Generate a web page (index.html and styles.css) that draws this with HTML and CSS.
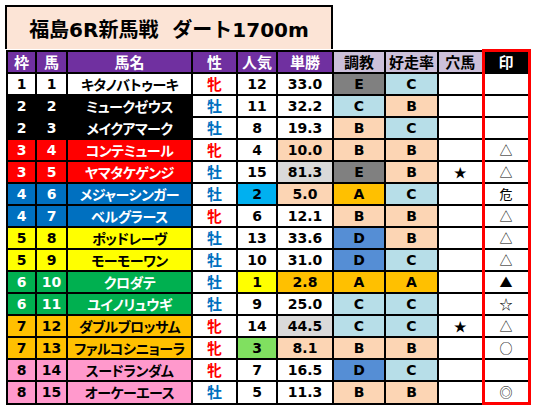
FILE: index.html
```html
<!DOCTYPE html>
<html lang="ja">
<head>
    <meta charset="UTF-8">
    <title>福島6R新馬戦 ダート1700m</title>
    <link rel="stylesheet" href="styles.css">
</head>
<body>
    <div class="sheet">
        <div class="title">福島6R新馬戦&nbsp;&nbsp;ダート1700m</div>
        <table class="race">
            <colgroup>
                <col class="c-waku"><col class="c-uma"><col class="c-name"><col class="c-sex"><col class="c-pop">
                <col class="c-odds"><col class="c-train"><col class="c-rate"><col class="c-ana"><col class="c-mark">
            </colgroup>
            <thead>
                <tr>
                    <th>枠</th><th>馬</th><th>馬名</th><th>性</th><th>人気</th><th>単勝</th>
                    <th class="sub">調教</th><th class="sub">好走率</th><th class="sub">穴馬</th><th class="mark">印</th>
                </tr>
            </thead>
            <tbody>
                <tr class="f1"><td>1</td><td>1</td><td>キタノバトゥーキ</td><td class="hin">牝</td><td>12</td><td>33.0</td><td class="gE">E</td><td class="gC">C</td><td class="ana"></td><td class="mark"></td></tr>
                <tr class="f2"><td>2</td><td>2</td><td>ミュークゼウス</td><td class="bo">牡</td><td>11</td><td>32.2</td><td class="gC">C</td><td class="gB">B</td><td class="ana"></td><td class="mark"></td></tr>
                <tr class="f2"><td>2</td><td>3</td><td>メイクアマーク</td><td class="bo">牡</td><td>8</td><td>19.3</td><td class="gB">B</td><td class="gC">C</td><td class="ana"></td><td class="mark"></td></tr>
                <tr class="f3"><td>3</td><td>4</td><td>コンテミュール</td><td class="hin">牝</td><td>4</td><td class="peach">10.0</td><td class="gB">B</td><td class="gB">B</td><td class="ana"></td><td class="mark">△</td></tr>
                <tr class="f3"><td>3</td><td>5</td><td>ヤマタケゲンジ</td><td class="bo">牡</td><td>15</td><td class="gray">81.3</td><td class="gE">E</td><td class="gB">B</td><td class="ana">★</td><td class="mark">△</td></tr>
                <tr class="f4"><td>4</td><td>6</td><td>メジャーシンガー</td><td class="bo">牡</td><td class="cyan">2</td><td class="peach">5.0</td><td class="gA">A</td><td class="gC">C</td><td class="ana"></td><td class="mark">危</td></tr>
                <tr class="f4"><td>4</td><td>7</td><td>ベルグラース</td><td class="hin">牝</td><td>6</td><td>12.1</td><td class="gB">B</td><td class="gB">B</td><td class="ana"></td><td class="mark">△</td></tr>
                <tr class="f5"><td>5</td><td>8</td><td>ポッドレーヴ</td><td class="bo">牡</td><td>13</td><td>33.6</td><td class="gD">D</td><td class="gB">B</td><td class="ana"></td><td class="mark">△</td></tr>
                <tr class="f5"><td>5</td><td>9</td><td>モーモーワン</td><td class="bo">牡</td><td>10</td><td>31.0</td><td class="gD">D</td><td class="gC">C</td><td class="ana"></td><td class="mark">△</td></tr>
                <tr class="f6"><td>6</td><td>10</td><td>クロダテ</td><td class="bo">牡</td><td class="yellow">1</td><td class="orange">2.8</td><td class="gA">A</td><td class="gA">A</td><td class="ana"></td><td class="mark">▲</td></tr>
                <tr class="f6"><td>6</td><td>11</td><td>ユイノリュウギ</td><td class="bo">牡</td><td>9</td><td>25.0</td><td class="gC">C</td><td class="gC">C</td><td class="ana"></td><td class="mark">☆</td></tr>
                <tr class="f7"><td>7</td><td>12</td><td>ダブルブロッサム</td><td class="hin">牝</td><td>14</td><td class="gray">44.5</td><td class="gC">C</td><td class="gC">C</td><td class="ana">★</td><td class="mark">△</td></tr>
                <tr class="f7"><td>7</td><td>13</td><td>ファルコシニョーラ</td><td class="hin">牝</td><td class="lgreen">3</td><td class="peach">8.1</td><td class="gB">B</td><td class="gB">B</td><td class="ana"></td><td class="mark">○</td></tr>
                <tr class="f8"><td>8</td><td>14</td><td>スードランダム</td><td class="hin">牝</td><td>7</td><td>16.5</td><td class="gD">D</td><td class="gC">C</td><td class="ana"></td><td class="mark"></td></tr>
                <tr class="f8 last"><td>8</td><td>15</td><td>オーケーエース</td><td class="bo">牡</td><td>5</td><td>11.3</td><td class="gB">B</td><td class="gB">B</td><td class="ana"></td><td class="mark">◎</td></tr>
            </tbody>
        </table>
    </div>
</body>
</html>
```

FILE: styles.css
```css
body {
    margin: 0;
    background-color: #ffffff;
    font-family: "DejaVu Sans", "Noto Sans CJK JP", sans-serif;
}

.sheet {
    padding: 5px 0 0 5px;
}

.title {
    width: 324px;
    height: 42px;
    border: 2px solid #000;
    border-bottom: none;
    background-color: #fce4d6;
    display: flex;
    justify-content: center;
    align-items: center;
    font-size: 20px;
    font-weight: bold;
    color: #000;
}

.race {
    margin-left: 1px;
    border-collapse: collapse;
    table-layout: fixed;
    width: 522px;
}

.c-waku { width: 29px; }
.c-uma { width: 31px; }
.c-name { width: 125px; }
.c-sex { width: 45px; }
.c-pop { width: 40px; }
.c-odds { width: 56px; }
.c-train { width: 52px; }
.c-rate { width: 53px; }
.c-ana { width: 45px; }
.c-mark { width: 46px; }

.race th,
.race td {
    border: 2px solid #000;
    height: 20px;
    padding: 0;
    line-height: 20px;
    text-align: center;
    white-space: nowrap;
    overflow: hidden;
    font-weight: bold;
}

.race th {
    background-color: #7030a0;
    color: #ffffff;
    font-family: "Noto Sans CJK JP", sans-serif;
    font-size: 15px;
}

.race th.sub {
    background-color: #ccc0da;
    color: #000;
}

.race th.mark {
    background-color: #000;
    color: #fff;
    border-top: 3px solid #ff0000;
}

.race td {
    font-size: 14px;
    color: #000;
    background-color: #fff;
}

/* horse name */
.race td:nth-child(3) {
    font-family: "Noto Sans CJK JP", sans-serif;
    font-size: 14px;
    font-feature-settings: "palt";
    letter-spacing: -0.5px;
}

/* frame colours: 枠, 馬, 馬名 */
.f2 td:nth-child(-n+3) { background-color: #000; color: #fff; }
.f3 td:nth-child(-n+3) { background-color: #ff0000; color: #fff; }
.f4 td:nth-child(-n+3) { background-color: #0070c0; color: #fff; }
.f5 td:nth-child(-n+3) { background-color: #ffff00; color: #000; }
.f6 td:nth-child(-n+3) { background-color: #00b050; color: #fff; }
.f7 td:nth-child(-n+3) { background-color: #ffc000; color: #000; }
.f8 td:nth-child(-n+3) { background-color: #ff99cc; color: #000; }

.race td.hin,
.race td.bo {
    font-family: "Noto Sans CJK JP", sans-serif;
    font-size: 15px;
}

.race td.hin { color: #ff0000; }
.race td.bo { color: #0070c0; }

.race td.cyan { background-color: #00b0f0; }
.race td.yellow { background-color: #ffff00; }
.race td.lgreen { background-color: #80e060; }
.race td.peach { background-color: #fcd5b4; }
.race td.gray { background-color: #d9d9d9; }
.race td.orange { background-color: #ffc000; }

.race td.gA { background-color: #ffc000; }
.race td.gB { background-color: #fcd5b4; }
.race td.gC { background-color: #b7dee8; }
.race td.gD { background-color: #558ed5; }
.race td.gE { background-color: #808080; }

.race td.ana {
    font-family: "Noto Sans CJK JP", sans-serif;
    font-weight: normal;
    font-size: 13px;
}

.race .mark {
    border-left: 3px solid #ff0000;
    border-right: 3px solid #ff0000;
}

.race td.mark {
    font-family: "Noto Sans CJK JP", sans-serif;
    font-weight: normal;
    font-size: 13px;
}

.race tr.last td.mark {
    border-bottom: 3px solid #ff0000;
}
```
